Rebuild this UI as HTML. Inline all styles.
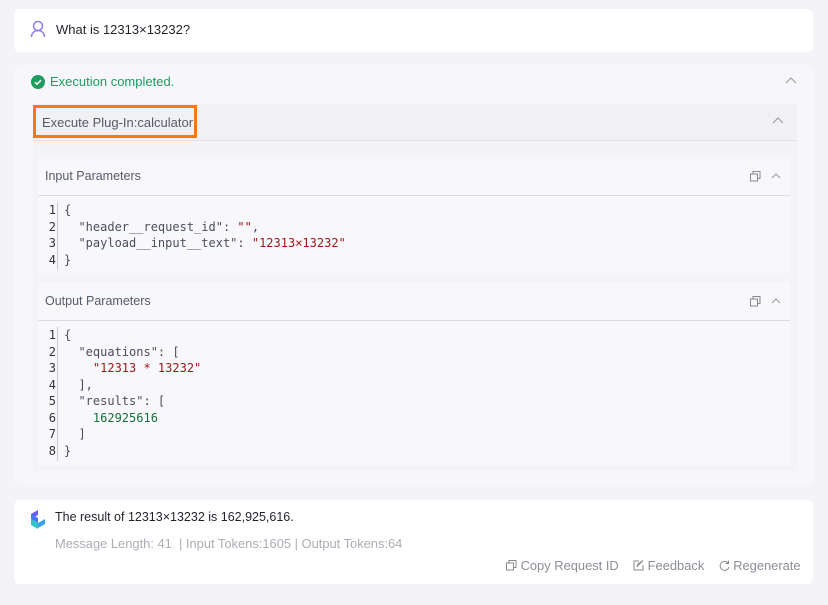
<!DOCTYPE html>
<html><head><meta charset="utf-8"><style>
*{box-sizing:border-box;margin:0;padding:0}
body{width:828px;height:605px;background:#f3f3f8;font-family:"Liberation Sans",sans-serif;position:relative;overflow:hidden;color:#1f2329}
.abs{position:absolute}
.card{background:#fff;border-radius:6px}
.code{font-family:"DejaVu Sans Mono",monospace;font-size:12px;line-height:16.5px;color:#4a4f5c}
.ln{position:absolute;left:0;width:18px;text-align:right;color:#333}
.s{color:#a31515}.n{color:#1a6b3a}
.gray{color:#555b66;font-size:13px}
</style></head><body>
<div class="abs card" style="left:14px;top:9px;width:799px;height:43px">
 <svg class="abs" style="left:16px;top:11px" width="16" height="18" viewBox="0 0 16 18"><circle cx="8" cy="6" r="4.5" fill="none" stroke="#8b7cf0" stroke-width="1.5"/><path d="M1.5 17c0-4 3-6.5 6.5-6.5s6.5 2.5 6.5 6.5" fill="none" stroke="#8b7cf0" stroke-width="1.5"/></svg>
 <div class="abs" style="left:42px;top:13px;font-size:13px">What is 12313×13232?</div>
</div>
<div class="abs" style="left:14px;top:65px;width:799px;height:420px;background:#f7f7fb;border-radius:6px">
 <svg class="abs" style="left:17px;top:10px" width="14" height="14" viewBox="0 0 14 14"><circle cx="7" cy="7" r="7" fill="#1f9c5e"/><path d="M4 7.2l2 2 4-4" fill="none" stroke="#fff" stroke-width="1.5"/></svg>
 <div class="abs" style="left:36px;top:9px;font-size:13px;color:#1f9c5e">Execution completed.</div>
 <svg class="abs" style="left:771px;top:12px" width="12" height="8"><path d="M1 6l5-5 5 5" fill="none" stroke="#999" stroke-width="1"/></svg>
 <div class="abs" style="left:19px;top:39px;width:764px;height:37px;background:#f0f0f5;border-bottom:1px solid #e2e2ea"></div>
 <div class="abs" style="left:19px;top:40px;width:164px;height:33px;border:3px solid #f07a1a"></div>
 <div class="abs gray" style="left:28px;top:50px">Execute Plug-In:calculator</div>
 <svg class="abs" style="left:758px;top:52px" width="12" height="8"><path d="M1 6l5-5 5 5" fill="none" stroke="#999" stroke-width="1"/></svg>
 <div class="abs" style="left:19px;top:76px;width:764px;height:330px;background:#f3f3f8"></div>
 <div class="abs" style="left:24px;top:92px;width:752px;height:116px;background:#f8f8fc">
  <div class="abs" style="left:0;top:0;width:752px;height:39px;border-bottom:1px solid #dcdce4"></div>
  <div class="abs gray" style="left:7px;top:12px;font-size:12.5px">Input Parameters</div>
  <svg class="abs" style="left:712px;top:14px" width="11" height="11"><rect x="0.5" y="3" width="7" height="7" fill="none" stroke="#888"/><path d="M3 3V0.5h7v7H7.5" fill="none" stroke="#888"/></svg>
  <svg class="abs" style="left:733px;top:15px" width="10" height="7"><path d="M1 6l4-4 4 4" fill="none" stroke="#999"/></svg>
  <div class="abs code" style="left:0;top:45px;width:100%">
   <div style="position:absolute;left:19px;top:0;width:1px;height:68px;background:#ccc"></div>
   <div class="ln" style="top:0">1</div><div class="ln" style="top:16.5px">2</div><div class="ln" style="top:33px">3</div><div class="ln" style="top:49.5px">4</div>
   <pre class="code" style="position:absolute;left:26px;top:0">{
  "header__request_id": <span class="s">""</span>,
  "payload__input__text": <span class="s">"12313×13232"</span>
}</pre>
  </div>
 </div>
 <div class="abs" style="left:24px;top:217px;width:752px;height:183px;background:#f8f8fc">
  <div class="abs" style="left:0;top:0;width:752px;height:39px;border-bottom:1px solid #dcdce4"></div>
  <div class="abs gray" style="left:7px;top:12px;font-size:12.5px">Output Parameters</div>
  <svg class="abs" style="left:712px;top:14px" width="11" height="11"><rect x="0.5" y="3" width="7" height="7" fill="none" stroke="#888"/><path d="M3 3V0.5h7v7H7.5" fill="none" stroke="#888"/></svg>
  <svg class="abs" style="left:733px;top:15px" width="10" height="7"><path d="M1 6l4-4 4 4" fill="none" stroke="#999"/></svg>
  <div class="abs code" style="left:0;top:45px;width:100%">
   <div style="position:absolute;left:19px;top:0;width:1px;height:134px;background:#ccc"></div>
   <div class="ln" style="top:0">1</div><div class="ln" style="top:16.5px">2</div><div class="ln" style="top:33px">3</div><div class="ln" style="top:49.5px">4</div><div class="ln" style="top:66px">5</div><div class="ln" style="top:82.5px">6</div><div class="ln" style="top:99px">7</div><div class="ln" style="top:115.5px">8</div>
   <pre class="code" style="position:absolute;left:26px;top:0">{
  "equations": [
    <span class="s">"12313 * 13232"</span>
  ],
  "results": [
    <span class="n">162925616</span>
  ]
}</pre>
  </div>
 </div>
</div>
<div class="abs card" style="left:14px;top:500px;width:799px;height:84px">
 <svg class="abs" style="left:16px;top:10px" width="16" height="19" viewBox="0 0 16 19"><path d="M8 0L1 4v5l7-4z" fill="#6a5cf0"/><path d="M1 9l7 4v6l-7-4z" fill="#2ec7c9"/><path d="M8 13l7-4v5l-7 4z" fill="#3aa0f0"/><path d="M1 4l7 4v5L1 9z" fill="#4a78f5"/></svg>
 <div class="abs" style="left:41px;top:10px;font-size:12.5px">The result of 12313×13232 is 162,925,616.</div>
 <div class="abs" style="left:41px;top:36px;font-size:12.9px;color:#aaaeb5">Message Length: 41 &nbsp;| Input Tokens:1605 | Output Tokens:64</div>
 <div class="abs" style="left:492px;top:58px;font-size:12.9px;color:#8a8e96;white-space:nowrap">
  <svg width="11" height="11" style="vertical-align:-1px"><rect x="0.5" y="3" width="7" height="7" fill="none" stroke="#888"/><path d="M3 3V0.5h7v7H7.5" fill="none" stroke="#888"/></svg> Copy Request ID &nbsp;&nbsp;
  <svg width="11" height="11" style="vertical-align:-1px"><path d="M6 1H1v9h9V5M4 7l1-3 5-3.5-1 1-4 4z" fill="none" stroke="#888"/></svg> Feedback &nbsp;&nbsp;
  <svg width="11" height="11" style="vertical-align:-1px"><path d="M9.5 3.5A4.5 4.5 0 1 0 10 7M9.5 0.5v3h-3" fill="none" stroke="#888"/></svg> Regenerate
 </div>
</div>
</body></html>
